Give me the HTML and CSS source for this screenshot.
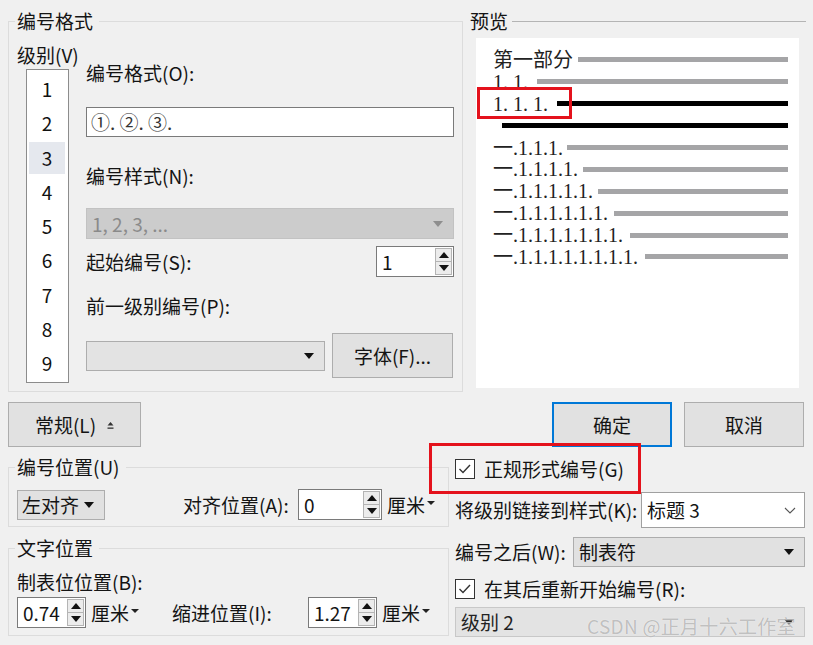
FILE: index.html
```html
<!DOCTYPE html>
<html lang="zh-CN">
<head>
<meta charset="utf-8">
<title>定义新多级列表</title>
<link rel="stylesheet" href="styles.css">
</head>
<body>
<div class="dialog">
  <div class="top">
    <div class="group fmt-group">
      <span class="group-title">编号格式</span>
      <div class="level-col">
        <div class="lbl">级别(V)</div>
        <ul class="level-list">
          <li>1</li><li>2</li><li class="sel">3</li><li>4</li><li>5</li><li>6</li><li>7</li><li>8</li><li>9</li>
        </ul>
      </div>
      <div class="fields">
        <div class="lbl f-lbl1">编号格式(O):</div>
        <div class="textbox fmt-input">①. ②. ③.</div>
        <div class="lbl f-lbl2">编号样式(N):</div>
        <div class="combo disabled style-combo"><span class="txt">1, 2, 3, ...</span><span class="arrow"></span></div>
        <div class="row start-row">
          <span class="lbl">起始编号(S):</span>
          <div class="spin start-spin"><span class="val">1</span><span class="spin-btns"><span class="sb up"></span><span class="sb dn"></span></span></div>
        </div>
        <div class="lbl f-lbl4">前一级别编号(P):</div>
        <div class="row prev-row">
          <div class="combo prev-combo"><span class="txt"></span><span class="arrow"></span></div>
          <div class="btn font-btn">字体(F)...</div>
        </div>
      </div>
    </div>
    <div class="preview-col">
      <div class="preview-head"><span>预览</span><span class="rule"></span></div>
      <div class="preview">
        <div class="pline"><span>第一部分</span><span class="bar" style="width:210px"></span></div>
        <div class="pline"><span>1. 1.</span><span class="bar" style="width:251px"></span></div>
        <div class="pline"><span>1. 1. 1.</span><span class="bar black" style="width:231px"></span></div>
        <div class="pline"><span></span><span class="bar black" style="width:286px"></span></div>
        <div class="pline"><span>一.1.1.1.</span><span class="bar" style="width:221px"></span></div>
        <div class="pline"><span>一.1.1.1.1.</span><span class="bar" style="width:205px"></span></div>
        <div class="pline"><span>一.1.1.1.1.1.</span><span class="bar" style="width:190px"></span></div>
        <div class="pline"><span>一.1.1.1.1.1.1.</span><span class="bar" style="width:174px"></span></div>
        <div class="pline"><span>一.1.1.1.1.1.1.1.</span><span class="bar" style="width:158px"></span></div>
        <div class="pline"><span>一.1.1.1.1.1.1.1.1.</span><span class="bar" style="width:143px"></span></div>
        <div class="redbox red1"></div>
      </div>
    </div>
  </div>

  <div class="btn-row">
    <div class="btn btn-general">常规(L)<svg class="gen-ico" width="7" height="9" viewBox="0 0 7 9"><polygon points="0.5,4.5 3.5,1 6.5,4.5" fill="#333"/><rect x="0.5" y="6.5" width="6" height="1.3" fill="#333"/></svg></div>
    <div class="btn btn-ok">确定</div>
    <div class="btn btn-cancel">取消</div>
  </div>

  <div class="bottom">
    <div class="bottom-left">
      <div class="group pos-group">
        <span class="group-title">编号位置(U)</span>
        <div class="row">
          <div class="combo align-combo"><span class="txt">左对齐</span><span class="arrow"></span></div>
          <span class="lbl align-lbl">对齐位置(A):</span>
          <div class="spin align-spin"><span class="val">0</span><span class="spin-btns"><span class="sb up"></span><span class="sb dn"></span></span></div>
          <span class="unit">厘米<span class="mini-arrow"></span></span>
        </div>
      </div>
      <div class="group text-group">
        <span class="group-title">文字位置</span>
        <div class="lbl">制表位位置(B):</div>
        <div class="row tab-row">
          <div class="spin small-spin"><span class="val">0.74</span><span class="spin-btns"><span class="sb up"></span><span class="sb dn"></span></span></div>
          <span class="unit unit-fixed">厘米<span class="mini-arrow"></span></span>
          <span class="lbl indent-lbl">缩进位置(I):</span>
          <div class="spin small-spin"><span class="val">1.27</span><span class="spin-btns"><span class="sb up"></span><span class="sb dn"></span></span></div>
          <span class="unit">厘米<span class="mini-arrow"></span></span>
        </div>
      </div>
    </div>
    <div class="bottom-right">
      <div class="check-row first-check"><span class="checkbox"><svg width="18" height="18" viewBox="0 0 18 18"><polyline points="3.5,9 7,12.5 14,5" fill="none" stroke="#333" stroke-width="1.4"/></svg></span><span>正规形式编号(G)</span></div>
      <div class="row link-row">
        <span class="lbl link-lbl">将级别链接到样式(K):</span>
        <div class="combo white-combo"><span class="txt">标题 3</span><svg width="12" height="7" viewBox="0 0 12 7"><polyline points="1,1 6,6 11,1" fill="none" stroke="#555" stroke-width="1.1"/></svg></div>
      </div>
      <div class="row after-row">
        <span class="lbl after-lbl">编号之后(W):</span>
        <div class="combo after-combo"><span class="txt">制表符</span><span class="arrow"></span></div>
      </div>
      <div class="check-row second-check"><span class="checkbox"><svg width="18" height="18" viewBox="0 0 18 18"><polyline points="3.5,9 7,12.5 14,5" fill="none" stroke="#333" stroke-width="1.4"/></svg></span><span>在其后重新开始编号(R):</span></div>
      <div class="combo level-combo"><span class="txt">级别 2</span><span class="arrow"></span></div>
    </div>
  </div>

  <div class="redbox red2"></div>
  <div class="watermark">CSDN @正月十六工作室</div>
</div>
</body>
</html>
```

FILE: styles.css
```css
* { box-sizing: border-box; }
html, body { margin: 0; padding: 0; }
body {
  background: #f0f0f0;
  font-family: "Noto Sans CJK SC", "Microsoft YaHei", sans-serif;
  font-size: 19px;
  line-height: 24px;
  color: #141414;
  width: 813px;
  height: 645px;
  overflow: hidden;
}
.dialog { position: relative; width: 813px; height: 645px; }

.lbl { display: block; height: 24px; line-height: 24px; white-space: nowrap; }
.row { display: flex; align-items: center; }

/* group boxes */
.group { position: relative; border: 1px solid #dcdcdc; }
.group-title {
  position: absolute;
  top: -13px;
  left: 6px;
  padding: 0 6px 0 2px;
  background: #f0f0f0;
  line-height: 24px;
  white-space: nowrap;
}

/* top area */
.top { display: flex; padding-top: 9px; }
.fmt-group {
  margin-top: 12px;
  margin-left: 8px;
  width: 455px;
  height: 371px;
  display: flex;
  padding: 21px 0 0 8px;
}
.level-col { width: 69px; flex: none; }
.level-list {
  list-style: none;
  margin: 2px 0 0 9px;
  padding: 2px 0 0 0;
  width: 43px;
  height: 314px;
  background: #fff;
  border: 1px solid #8c8c8c;
}
.level-list li {
  height: 34.25px;
  line-height: 32px;
  margin: 0 3px 0 2px;
  text-align: center;
  border-top: 1px solid transparent;
  border-bottom: 1px solid transparent;
  background-clip: padding-box;
  color: #111;
}
.level-list li.sel { background-color: #e5e8ee; }

.fields { width: 368px; flex: none; }
.f-lbl1 { margin-top: 18px; }
.textbox {
  background: #fff;
  border: 1px solid #7a7a7a;
  height: 30px;
  line-height: 28px;
  padding-left: 4px;
}
.fmt-input { margin-top: 22px; color: #333; }
.f-lbl2 { margin-top: 27px; }

.combo {
  display: flex;
  align-items: center;
  border: 1px solid #adadad;
  background: #e1e1e1;
  padding: 0 10px 0 5px;
  white-space: nowrap;
}
.combo .txt { flex: 1; }
.arrow {
  width: 0; height: 0;
  border-left: 5px solid transparent;
  border-right: 5px solid transparent;
  border-top: 6px solid #111;
}
.combo.disabled { background: #cccccc; border-color: #c2c2c2; color: #8a8a8a; }
.combo.disabled .arrow { border-top-color: #8e8e8e; }
.style-combo { margin-top: 20px; height: 31px; }

.start-row { margin-top: 7px; height: 31px; }
.start-spin { margin-left: auto; width: 78px; }
.f-lbl4 { margin-top: 17px; }
.prev-row { margin-top: 15px; height: 45px; }
.prev-combo { width: 239px; height: 30px; background: #e3e3e3; }
.font-btn { margin-left: 7px; width: 121px; height: 45px; }

/* spinner */
.spin {
  display: flex;
  height: 31px;
  background: #fff;
  border: 1px solid #7a7a7a;
  flex: none;
}
.spin .val { flex: 1; padding-left: 5px; line-height: 29px; }
.spin-btns {
  display: flex;
  flex-direction: column;
  width: 17px;
  margin: 1px 1px 1px 0;
}
.sb {
  flex: 1;
  border: 1px solid #b4b4b4;
  background: #ececec;
  display: flex;
  align-items: center;
  justify-content: center;
}
.sb.dn { border-top: none; }
.sb::after {
  content: "";
  width: 0; height: 0;
  border-left: 5px solid transparent;
  border-right: 5px solid transparent;
}
.sb.up::after { border-bottom: 6px solid #111; }
.sb.dn::after { border-top: 6px solid #111; }

/* buttons */
.btn {
  display: flex;
  align-items: center;
  justify-content: center;
  background: #e1e1e1;
  border: 1px solid #adadad;
  white-space: nowrap;
}
.btn-row { display: flex; margin-top: 10px; height: 45px; padding-right: 9px; }
.btn-general { margin-left: 8px; width: 133px; }
.gen-ico { margin-left: 11px; margin-top: 2px; }
.btn-ok { margin-left: auto; width: 120px; border: 2px solid #0078d7; }
.btn-cancel { margin-left: 12px; width: 120px; }

/* preview */
.preview-col { margin-left: 7px; width: 336px; flex: none; }
.preview-head { display: flex; align-items: center; height: 24px; }
.preview-head .rule { flex: 1; height: 1px; background: #b4b4b4; margin-left: 4px; }
.preview {
  position: relative;
  margin: 5px 0 0 6px;
  width: 323px;
  height: 350px;
  background: #fff;
  padding: 11px 11px 0 17px;
  font-family: "Liberation Serif", "Noto Sans CJK SC", serif;
  font-size: 20px;
  color: #222;
}
.pline {
  display: flex;
  align-items: center;
  justify-content: space-between;
  height: 21.9px;
  white-space: nowrap;
}
.bar { height: 5px; background: #a5a5a7; flex: none; }
.bar.black { background: #000; }

.redbox { position: absolute; border: 3px solid #e4121c; }
.red1 { left: 1px; top: 49px; width: 95px; height: 32px; }
.red2 { left: 429px; top: 443px; width: 212px; height: 51px; }

/* bottom */
.bottom { display: flex; }
.bottom-left { margin-left: 8px; width: 441px; flex: none; }
.pos-group { margin-top: 20px; height: 60px; padding: 21px 0 0 8px; }
.align-combo { width: 88px; height: 30px; padding-left: 4px; }
.align-lbl { margin-left: 78px; width: 115px; }
.align-spin { width: 84px; }
.unit { margin-left: 5px; white-space: nowrap; display: flex; align-items: center; }
.mini-arrow {
  width: 0; height: 0;
  margin-left: 2px;
  margin-top: -3px;
  border-left: 4px solid transparent;
  border-right: 4px solid transparent;
  border-top: 4px solid #222;
}
.text-group { margin-top: 21px; height: 88px; padding: 21px 0 0 8px; }
.tab-row { margin-top: 3px; }
.small-spin { width: 69px; }
.unit-fixed { width: 81px; }
.indent-lbl { width: 136px; }

.bottom-right { margin-left: 6px; width: 350px; flex: none; }
.check-row { display: flex; align-items: center; height: 24px; white-space: nowrap; }
.checkbox {
  width: 20px; height: 20px;
  border: 1px solid #333;
  background: #fff;
  margin-right: 9px;
  display: flex;
  align-items: center;
  justify-content: center;
}
.first-check { margin-top: 10px; }
.link-row { margin-top: 11px; height: 36px; }
.link-lbl { width: 186px; }
.white-combo { width: 164px; height: 36px; background: #fff; border-color: #a0a0a0; padding-right: 8px; }
.after-row { margin-top: 9px; height: 30px; }
.after-lbl { width: 118px; }
.after-combo { width: 232px; height: 30px; }
.second-check { margin-top: 10px; }
.level-combo { margin-top: 6px; width: 350px; height: 30px; background: #e3e3e3; border-color: #c8c8c8; color: #222; }

.watermark {
  position: absolute;
  left: 587px;
  top: 614px;
  font-size: 19px;
  line-height: 24px;
  color: rgba(140, 140, 140, 0.55);
  text-shadow: 0 0 1px #fff;
  white-space: nowrap;
  letter-spacing: 0.3px;
}
```
